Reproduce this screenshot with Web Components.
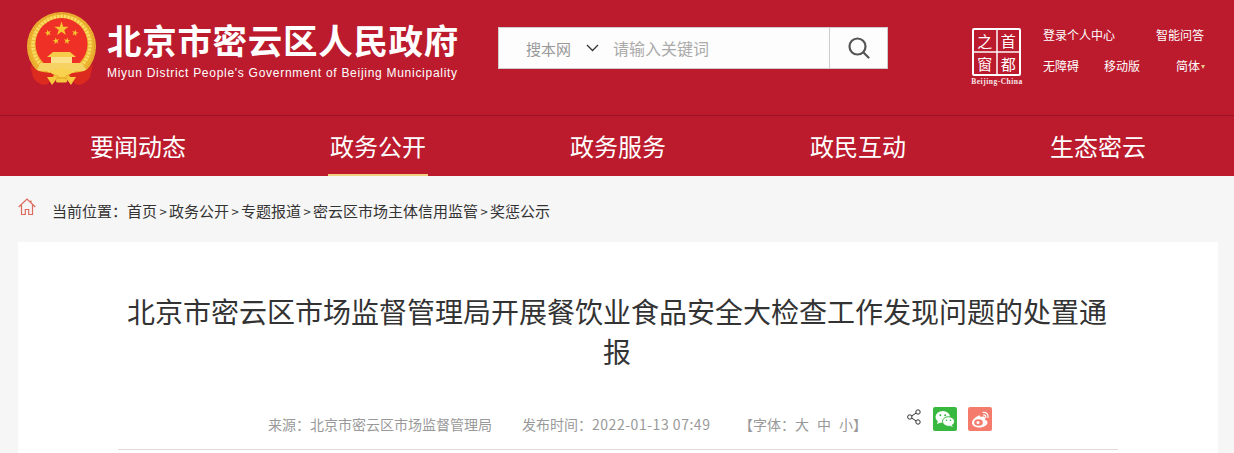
<!DOCTYPE html>
<html lang="zh-CN"><head><meta charset="utf-8"><title>北京市密云区人民政府</title>
<style>
html,body{margin:0;padding:0;background:#f6f6f6;height:453px;overflow:hidden;font-family:"Noto Sans CJK SC","Liberation Sans",sans-serif}
</style></head><body>
<site-header></site-header>
<main-nav></main-nav>
<bread-crumb></bread-crumb>
<article-card></article-card>
<script>
const mk=(name,html)=>customElements.define(name,class extends HTMLElement{constructor(){super();this.attachShadow({mode:'open'}).innerHTML=html}});
const FONT='"Noto Sans CJK SC","Liberation Sans",sans-serif';
const star=(cx,cy,r,rot=0)=>{let p=[];for(let i=0;i<10;i++){const a=(rot-90+i*36)*Math.PI/180,q=i%2?r*.38:r;p.push((cx+q*Math.cos(a)).toFixed(2)+','+(cy+q*Math.sin(a)).toFixed(2))}return `<polygon points="${p.join(' ')}"/>`};
mk('gov-emblem',`<style>:host{display:block;width:70px;height:74px}svg{display:block}</style>
<svg width="70" height="74" viewBox="0 0 70 74">
<circle cx="34.500" cy="34.500" r="34.500" fill="#ecb230"/>
<circle cx="34.500" cy="34.500" r="33" fill="none" stroke="#d9992a" stroke-width="1" stroke-dasharray="1.500 1.500"/>
<circle cx="34.500" cy="33" r="28.500" fill="none" stroke="#f9dc62" stroke-width="3.500" stroke-dasharray="2.500 1"/>
<circle cx="34.500" cy="32" r="26" fill="#ef3026"/>
<g fill="#f6c730">
${star(34.500,17,7.500)}${star(21,21,3.500,-15)}${star(48,21,3.500,15)}${star(29,29,3.500,-10)}${star(40,29,3.500,10)}
</g>
<path d="M26 40h17l6 5H20z" fill="#f7cc4a"/>
<rect x="24" y="45" width="21" height="6" fill="#fbe08a"/>
<path d="M14 51h41l5 8H9z" fill="#f6d163"/>
<path d="M3 52c3 4 7 7 13 8l8 1 3 2-6 9-4 1c-5-1-9-4-11-8zM66 52c-3 4-7 7-13 8l-8 1-3 2 6 9 4 1c5-1 9-4 11-8z" fill="#dc2a1e"/>
<path d="M24 60c2-3 5-3 7-2 1-3 6-3 8 0 2-1 5-1 7 2l-4 2c-2 0-3 1-4 3h-6c-1-2-2-3-4-3z" fill="#f8d24e"/>
<path d="M20 65c4 0 7 0 10-1l-2 5-3 4zM49 65c-4 0-7 0-10-1l2 5 3 4z" fill="#f4c93e"/>
<rect x="29" y="67" width="11" height="3.500" rx="1.500" fill="#f4c93e"/>
</svg>`);
mk('site-logo',`<style>:host{display:flex;box-sizing:border-box;gap:10px;align-items:flex-start;padding:12px 0 0 28px;color:#fff}
.t{padding-top:5px;width:360px}
h1{margin:0;font:700 34.500px/44px ${FONT};letter-spacing:.7px;white-space:nowrap;height:44px}
p{margin:4px 0 0;font:12px/17px "Liberation Sans",sans-serif;letter-spacing:.72px;white-space:nowrap}
</style><gov-emblem style="margin-left:-1px"></gov-emblem><div class="t"><h1>北京市密云区人民政府</h1><p>Miyun District People's Government of Beijing Municipality</p></div>`);
mk('search-box',`<style>:host{display:flex;box-sizing:border-box;width:390px;height:42px;border:1px solid #ccc;background:#fdfdfd;align-items:center;font-family:${FONT}}
.s{margin-left:27px;font-size:15px;color:#999;width:46px;white-space:nowrap}
svg.c{margin:0 14px 0 14px;display:block}
.p{flex:1;font-size:16px;color:#aaa;white-space:nowrap}
.b{width:57px;height:100%;border-left:1px solid #ccc;display:flex;align-items:center;justify-content:center}
</style><span class="s">搜本网</span><svg class="c" width="13" height="8" viewBox="0 0 13 8"><path d="M1 1l5.500 5.500L12 1" fill="none" stroke="#333" stroke-width="1.300"/></svg><span class="p">请输入关键词</span>
<span class="b"><svg width="22" height="22" viewBox="0 0 22 22" fill="none" stroke="#555" stroke-width="2.200"><circle cx="9.500" cy="9.500" r="8"/><path d="M15.500 15.500l5 5" stroke-linecap="round"/></svg></span>`);
mk('capital-badge',`<style>:host{display:block;width:56px;color:#fff;font-family:${FONT}}
.box{box-sizing:border-box;width:49px;height:48px;margin-left:3px;border:2px solid #fff;border-radius:2px;display:grid;grid-template:1fr 1fr/1fr 1fr;gap:2px;background:linear-gradient(#ffffffbb,#ffffffbb) center/100% 2px no-repeat,linear-gradient(#ffffffbb,#ffffffbb) center/2px 100% no-repeat}
span{display:flex;align-items:center;justify-content:center;font-size:15px;line-height:20px;font-weight:400}
i{display:block;font:700 7.500px/9px "Liberation Serif",serif;letter-spacing:.5px;text-align:center;margin-top:1px;white-space:nowrap;opacity:.9}
</style><div class="box"><span>之</span><span>首</span><span>窗</span><span>都</span></div><i>Beijing-China</i>`);
mk('top-links',`<style>:host{display:grid;grid-template-columns:61px 52px 49px;grid-template-rows:31px 31px;color:#fff;font:12px/18px ${FONT};width:162px;align-items:center;white-space:nowrap}
.w{grid-column:3}
.s{grid-column:1/3}
.t{text-align:right}
.t::after{content:"";display:inline-block;border:2.500px solid transparent;border-top:4px solid #e6c98a;border-bottom:0;margin-left:1px;vertical-align:2px}
</style><span class="s">登录个人中心</span><span class="w">智能问答</span><span>无障碍</span><span>移动版</span><span class="t">简体</span>`);
mk('site-header',`<style>:host{display:flex;box-sizing:border-box;height:116px;background:#bc1b2e;border-bottom:1px solid #9c1226}
site-logo{width:498px}
search-box{margin-top:27px}
capital-badge{margin:28px 0 0 81px}
top-links{margin:19px 0 0 18px}
</style><site-logo></site-logo><search-box></search-box><capital-badge></capital-badge><top-links></top-links>`);
mk('main-nav',`<style>:host{display:flex;height:60px;padding:0 18px;background:#bc1b2e;color:#fff;font:24px/60px ${FONT}}
a{flex:0 0 240px;display:flex;justify-content:center}
b{font-weight:400;display:block;box-sizing:border-box;height:60px;padding:0 2px}
.on{border-bottom:2px solid #f1d07f}
</style><a><b>要闻动态</b></a><a><b class="on">政务公开</b></a><a><b>政务服务</b></a><a><b>政民互动</b></a><a><b>生态密云</b></a>`);
mk('bread-crumb',`<style>:host{display:flex;align-items:center;height:66px;padding-left:18px;color:#333;font:15px/20px ${FONT};white-space:nowrap}
svg{display:block;margin:-4px 16px 0 0}
span{padding-top:4px}
i{font-style:normal;display:inline-block;width:12px;text-align:center;font-size:13px}
</style><svg width="18" height="18" viewBox="0 0 18 18" fill="none" stroke="#dc6a5d" stroke-width="1.200"><path d="M.7 9L9 1l8.300 8M3.500 7v9.500h3.800v-5h3.400v5h3.800V7M13 2.500V5"/></svg><span>当前位置：首页<i>&gt;</i>政务公开<i>&gt;</i>专题报道<i>&gt;</i>密云区市场主体信用监管<i>&gt;</i>奖惩公示</span>`);
mk('share-bar',`<style>:host{display:flex;align-items:flex-start;gap:12px;margin-top:2px}
.sh{margin:2px 0 0 0;display:block}
.i{width:24px;height:24px;border-radius:2px;display:block}
.w{background:#39b83f;margin-right:-1px}
.b{background:#f57c6c}
</style><svg class="sh" width="14" height="16" viewBox="0 0 14 16" fill="none" stroke="#333" stroke-width="1"><circle cx="2.800" cy="8" r="2.200"/><circle cx="11" cy="3" r="2.200"/><circle cx="11" cy="13" r="2.200"/><path d="M4.700 6.900L9.100 4.100M4.700 9.100L9.100 11.900"/></svg>
<svg class="i w" viewBox="0 0 24 24"><ellipse cx="9.800" cy="10" rx="7.300" ry="6" fill="#fff"/><path d="M5 14l-1 3 4-1.500z" fill="#fff"/><ellipse cx="15.500" cy="14.500" rx="6" ry="4.800" fill="#fff" stroke="#39b83f"/><path d="M18.500 18l1.500 2-4-1.500z" fill="#fff"/><circle cx="7.300" cy="8.300" r="1" fill="#39b83f"/><circle cx="12.200" cy="8.300" r="1" fill="#39b83f"/><circle cx="13.500" cy="13.300" r=".8" fill="#39b83f"/><circle cx="17.500" cy="13.300" r=".8" fill="#39b83f"/></svg>
<svg class="i b" viewBox="0 0 24 24"><path d="M10 9c-3 1.500-6 4-6 7 0 3 4 4.500 7.500 4.500 4 0 8-2.300 8-5 0-2-2-2.500-2.500-3 .8-1.800 0-3-2-3-1 0-2 .5-2.500.7-.2-1.700-1-2-2.500-1.200z" fill="#fff"/><ellipse cx="10.500" cy="15.500" rx="4.300" ry="3.200" fill="#f57c6c"/><circle cx="10" cy="15.500" r="1.500" fill="#fff"/><path d="M15 5.500c3.500-.5 5.500 2 5 5M15.500 8c1.500-.2 2.500.8 2.300 2.300" fill="none" stroke="#fff" stroke-width="1.200" stroke-linecap="round"/></svg>`);
mk('article-meta',`<style>:host{display:flex;box-sizing:border-box;height:49px;border-bottom:1px solid #ddd;color:#999;font:14px/20px ${FONT};white-space:nowrap;align-items:flex-start}
.w{display:flex;width:100%;padding-top:4px}
span{display:block;margin-top:9px}
.a{margin-left:150px;width:254px}
.d{width:217px}.d b{font-weight:400;letter-spacing:.53px}
.f{width:168px}.f u{text-decoration:none;margin-right:8px}.f u:last-child{margin:0}
share-bar{margin-top:2px}
</style><div class="w"><span class="a">来源：北京市密云区市场监督管理局</span><span class="d">发布时间：<b>2022-01-13 07:49</b></span><span class="f">【字体：<u>大</u><u>中</u><u>小</u>】</span><share-bar></share-bar></div>`);
mk('article-card',`<style>:host{display:block;margin:0 16px 0 18px;background:#fff;padding:0 100px;height:211px;box-sizing:border-box}
h2{margin:0 0 0 -2px;padding-top:49px;font:400 28px/40px ${FONT};color:#333;text-align:center}
article-meta{margin-top:30px}
</style><h2>北京市密云区市场监督管理局开展餐饮业食品安全大检查工作发现问题的处置通报</h2><article-meta></article-meta>`);
</script></body></html>
